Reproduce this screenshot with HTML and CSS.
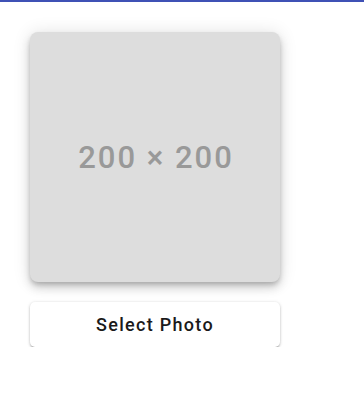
FILE: index.html
```html
<!DOCTYPE html>
<html>
<head>
<meta charset="utf-8">
<link rel="stylesheet" href="styles.css">
</head>
<body>
<div class="topbar"></div>
<main class="content">
  <div class="photo"><span class="photo-label">200 × 200</span></div>
  <button class="select-btn">Select Photo</button>
</main>
</body>
</html>
```
FILE: styles.css
```css
html, body {
  margin: 0;
  padding: 0;
  background: #ffffff;
  font-family: Roboto, "Liberation Sans", sans-serif;
}
.topbar {
  height: 2px;
  background: #3f51b5;
}
.content {
  padding: 30px 0 0 30px;
  display: flex;
  flex-direction: column;
  gap: 20px;
  width: 250px;
}
.photo {
  width: 250px;
  height: 250px;
  background: #dddddd;
  border-radius: 8px;
  box-shadow: 0 3px 5px -1px rgba(0,0,0,0.2), 0 6px 10px 0 rgba(0,0,0,0.14), 0 1px 18px 0 rgba(0,0,0,0.12);
  display: flex;
  align-items: center;
  justify-content: center;
}
.photo-label {
  font-family: Roboto, "Liberation Sans", sans-serif;
  font-weight: 500;
  font-size: 31px;
  letter-spacing: 2px;
  margin-right: -2px;
  color: #999999;
}
.select-btn {
  width: 250px;
  height: 45px;
  border: none;
  border-radius: 5px;
  background: #ffffff;
  box-shadow: 0 2px 2px -1px rgba(0,0,0,0.25), 0 1px 3px 0 rgba(0,0,0,0.2), 0 0 4px 0 rgba(0,0,0,0.06);
  font-family: Roboto, "Liberation Sans", sans-serif;
  font-weight: 500;
  font-size: 18px;
  letter-spacing: 1.3px;
  color: #1a1a1a;
  padding: 0;
}
```
